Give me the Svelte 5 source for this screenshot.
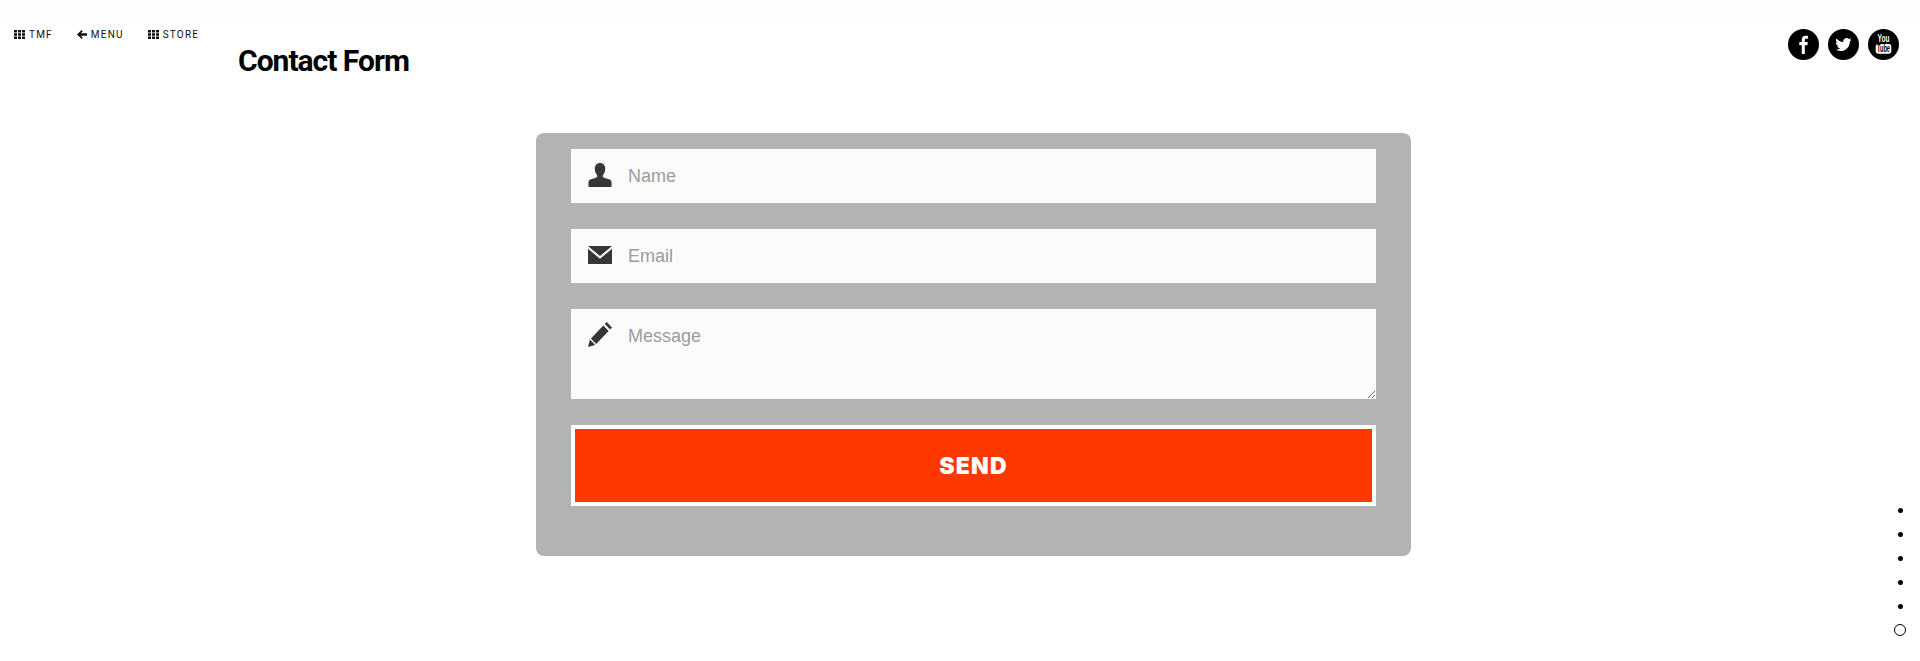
<script>
  let name = ''
  let email = ''
  let message = ''

  const navItems = [
    { label: 'TMF', icon: 'grid' },
    { label: 'MENU', icon: 'arrow' },
    { label: 'STORE', icon: 'grid' },
  ]
  const dots = [1, 2, 3, 4, 5]
</script>

<div class="page">
  <div class="strip"></div>

  <header class="top">
    <nav class="nav">
      {#each navItems as item}
        <a class="nav-item" href="#top">
          {#if item.icon === 'grid'}
            <svg width="11" height="9" viewBox="0 0 11 9" aria-hidden="true">
              <path d="M0 0h3v2.400H0zM4 0h3v2.400H4zM8 0h3v2.400H8zM0 3.300h3v2.400H0zM4 3.300h3v2.400H4zM8 3.300h3v2.400H8zM0 6.600h3V9H0zM4 6.600h3V9H4zM8 6.600h3V9H8z" />
            </svg>
          {:else}
            <svg width="10" height="9" viewBox="0 0 10 9" aria-hidden="true">
              <path d="M4.600 0 5.800 1.200 3.900 3.200H10v2.600H3.900l1.900 2L4.600 9 0 4.500z" />
            </svg>
          {/if}
          <span>{item.label}</span>
        </a>
      {/each}
    </nav>

    <h1>Contact Form</h1>

    <div class="social">
      <a class="circle" href="#top" aria-label="Facebook">
        <svg width="31" height="31" viewBox="0 0 31 31">
          <path d="M16.800 25v-8.700h2.600l.4-3.200h-3v-1.900c0-.9.300-1.500 1.500-1.500h1.600V6.800c-.3 0-1.200-.1-2.300-.1-2.300 0-3.800 1.400-3.800 4v2.400h-2.500v3.200h2.500V25z" fill="#fff" />
        </svg>
      </a>
      <a class="circle" href="#top" aria-label="Twitter">
        <svg width="31" height="31" viewBox="0 0 24 24">
          <g transform="translate(5.700 5.800) scale(0.52)">
            <path d="M23.950 4.570a10 10 0 0 1-2.830.78 4.960 4.960 0 0 0 2.160-2.720c-.95.55-2 .96-3.130 1.190a4.920 4.920 0 0 0-8.380 4.480C7.690 8.100 4.070 6.130 1.640 3.160a4.820 4.820 0 0 0-.67 2.480c0 1.710.87 3.210 2.190 4.100a4.900 4.900 0 0 1-2.230-.62v.06a4.920 4.920 0 0 0 3.950 4.830 5 5 0 0 1-2.210.08 4.940 4.940 0 0 0 4.600 3.420A9.870 9.870 0 0 1 0 19.540a13.940 13.940 0 0 0 7.550 2.210c9.050 0 14-7.500 14-13.980 0-.21 0-.42-.02-.63a9.940 9.940 0 0 0 2.460-2.550z" fill="#fff" />
          </g>
        </svg>
      </a>
      <a class="circle" href="#top" aria-label="YouTube">
        <svg width="31" height="31" viewBox="0 0 31 31">
          <text class="yt" x="15.500" y="13.300" text-anchor="middle" textLength="12" lengthAdjust="spacingAndGlyphs">You</text>
          <rect x="7.700" y="15" width="15.600" height="9.700" rx="2.400" fill="#fff" />
          <text class="yt dark" x="15.500" y="23.300" text-anchor="middle" textLength="13" lengthAdjust="spacingAndGlyphs">Tube</text>
        </svg>
      </a>
    </div>
  </header>

  <main class="main">
    <form class="card" on:submit|preventDefault>
      <label class="field">
        <svg class="icon" width="24" height="24" viewBox="0 0 26 25" preserveAspectRatio="none" aria-hidden="true">
          <path d="M13 0c3.400 0 5.700 2.500 5.700 6 0 2.700-1.100 5-2.400 6.500-.7 1-.5 2.100.6 2.600 1.500.7 3.800 1.100 5.800 1.900 2 .8 2.800 1.700 2.800 3.200V25H.5v-4.800c0-1.500.8-2.400 2.800-3.200 2-.8 4.300-1.200 5.800-1.900 1.100-.5 1.300-1.600.6-2.600C8.400 11 7.300 8.700 7.300 6 7.300 2.500 9.600 0 13 0z" />
        </svg>
        <input type="text" placeholder="Name" bind:value={name} />
      </label>

      <label class="field">
        <svg class="icon" width="24" height="18" viewBox="0 0 25 19" preserveAspectRatio="none" aria-hidden="true">
          <path d="M0 0h25L12.500 10.600z" />
          <path d="M0 2.900 12.500 13.500 25 2.900V19H0z" />
        </svg>
        <input type="email" placeholder="Email" bind:value={email} />
      </label>

      <label class="field tall">
        <svg class="icon pen" width="24" height="25" viewBox="0 0 25 25" preserveAspectRatio="none" aria-hidden="true">
          <path d="M19.500 0 25 5.500l-2 2L17.500 2zM16 3.500 21.500 9 8.500 22 3 16.500zM2 17.500 7.500 23 0 25z" />
        </svg>
        <textarea placeholder="Message" bind:value={message}></textarea>
      </label>

      <button class="send" type="submit">SEND</button>
    </form>
  </main>

  <ul class="dots" aria-hidden="true">
    {#each dots as d}
      <li class="slot"><span class="dot" data-d={d}></span></li>
    {/each}
    <li class="slot"><span class="ring"></span></li>
  </ul>
</div>

<style>
  :global(body) {
    margin: 0;
    background: #fff;
    font-family: Roboto, "Liberation Sans", sans-serif;
  }

  .page {
    position: relative;
    height: 661px;
    overflow: hidden;
    background: #fff;
  }

  .strip {
    height: 23px;
    background: #fdfdfd;
  }

  .top {
    display: flex;
    align-items: flex-start;
    height: 110px;
  }

  .nav {
    display: flex;
    width: 238px;
    flex-shrink: 0;
    padding: 6px 0 0 14px;
    box-sizing: border-box;
    gap: 24px;
  }

  .nav-item {
    display: flex;
    align-items: center;
    gap: 4px;
    height: 10px;
    color: #111;
    text-decoration: none;
    font-size: 10px;
    letter-spacing: 1.2px;
  }

  .nav-item svg {
    fill: #111;
    flex-shrink: 0;
  }

  h1 {
    margin: 22px 0 0;
    font-size: 30px;
    line-height: 32px;
    font-weight: 700;
    letter-spacing: -1px;
    color: #000;
  }

  .social {
    display: flex;
    gap: 9px;
    margin-left: auto;
    margin-right: 21px;
    margin-top: 6px;
  }

  .circle {
    display: block;
    width: 31px;
    height: 31px;
    border-radius: 50%;
    background: #000;
  }

  .circle svg {
    display: block;
  }

  .yt {
    font-family: "Liberation Sans", sans-serif;
    font-size: 10px;
    font-weight: 700;
    fill: #fff;
  }

  .yt.dark {
    fill: #000;
  }

  .main {
    padding-left: 536px;
  }

  .card {
    display: flex;
    flex-direction: column;
    gap: 26px;
    width: 875px;
    height: 423px;
    box-sizing: border-box;
    padding: 16px 35px 0;
    background: #b3b3b3;
    border-radius: 8px;
  }

  .field {
    position: relative;
    display: block;
    height: 54px;
  }

  .field.tall {
    height: 90px;
  }

  .icon {
    position: absolute;
    left: 17px;
    top: 14px;
    fill: #363636;
  }

  .field:nth-child(2) .icon {
    top: 17px;
  }

  .icon.pen {
    top: 13px;
  }

  input,
  textarea {
    display: block;
    width: 100%;
    height: 100%;
    box-sizing: border-box;
    margin: 0;
    padding: 0 16px 0 57px;
    border: 0;
    border-radius: 0;
    outline: none;
    background: #fbfbfb;
    color: #333;
    font-family: "Liberation Sans", Arial, sans-serif;
    font-size: 18px;
  }

  textarea {
    padding-top: 17px;
    line-height: 21px;
    resize: vertical;
  }

  input::placeholder,
  textarea::placeholder {
    color: #9c9c9c;
    opacity: 1;
  }

  .send {
    display: block;
    height: 81px;
    border: 4px solid #fff;
    background: #ff3800;
    color: #fff;
    font-family: Inter, Roboto, sans-serif;
    font-size: 23px;
    font-weight: 900;
    letter-spacing: 1.2px;
    cursor: pointer;
  }

  .dots {
    position: absolute;
    right: 14px;
    top: 498px;
    width: 12px;
    margin: 0;
    padding: 0;
    list-style: none;
  }

  .slot {
    display: flex;
    align-items: center;
    justify-content: center;
    height: 24px;
  }

  .dot {
    width: 5px;
    height: 5px;
    border-radius: 50%;
    background: #000;
  }

  .ring {
    box-sizing: border-box;
    width: 12px;
    height: 12px;
    border-radius: 50%;
    border: 1px solid #000;
  }
</style>
